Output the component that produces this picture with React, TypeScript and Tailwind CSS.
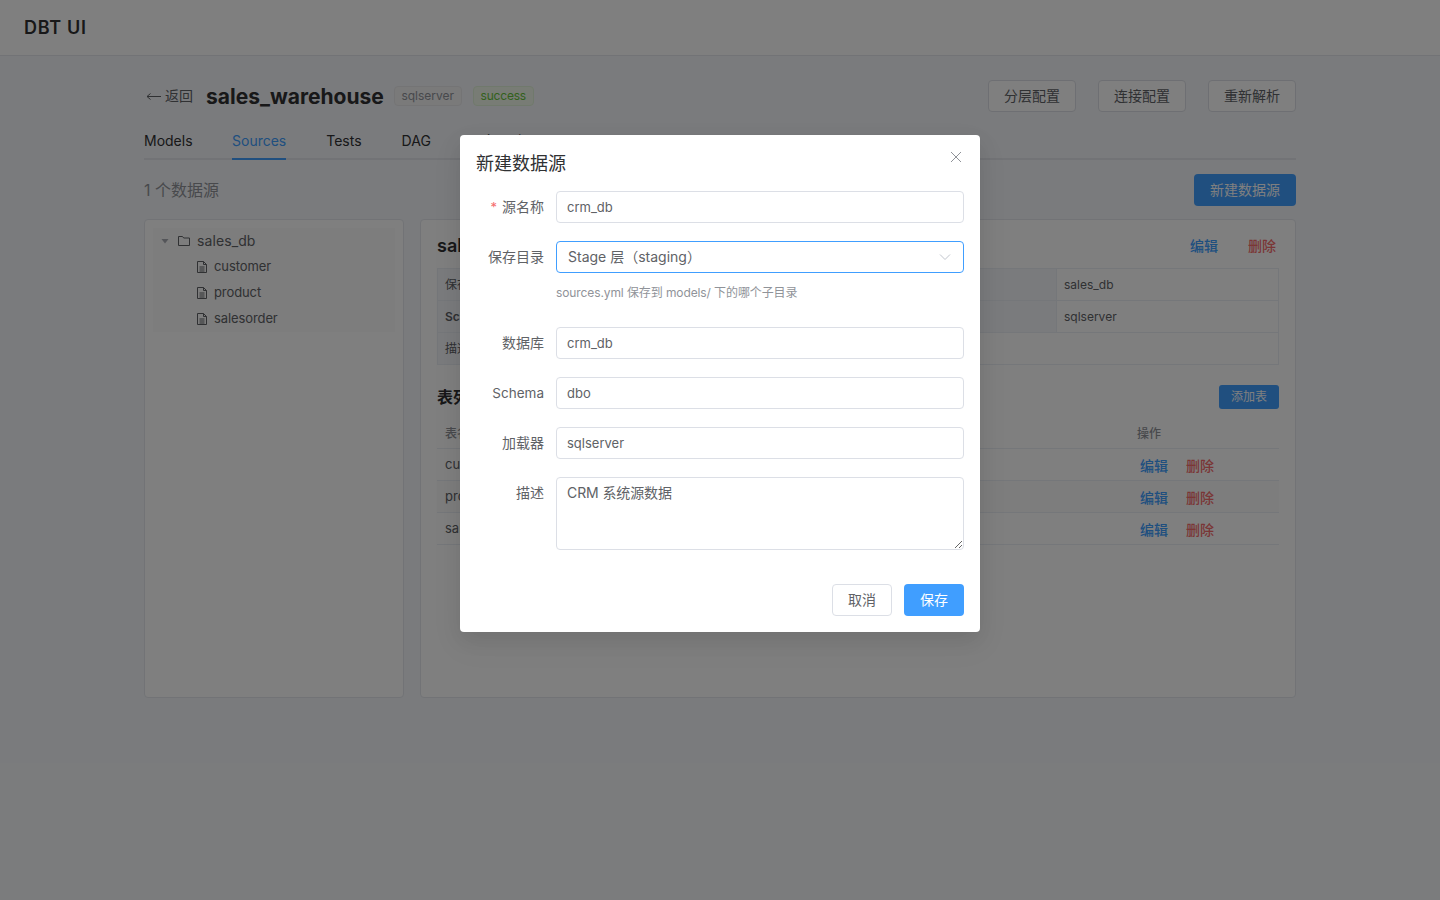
import React from "react";

const FONT = "font-['Inter','Noto_Sans_CJK_SC',sans-serif]";

function FolderIcon() {
  return (
    <svg width="14" height="14" viewBox="0 0 14 14" fill="none" stroke="#606266" strokeWidth="1">
      <path d="M1.5 2.5h4l1.2 1.5h5.8v7.5h-11z" />
    </svg>
  );
}

function DocIcon() {
  return (
    <svg width="12" height="14" viewBox="0 0 12 14" fill="none" stroke="#606266" strokeWidth="1">
      <path d="M1.5 1.5h6l3 3v8h-9z" />
      <path d="M7.5 1.5v3h3M3.5 7h5M3.5 9h5M3.5 11h5" />
    </svg>
  );
}

function TreeChild({ name }: { name: string }) {
  return (
    <div className="flex h-[26px] items-center pl-[43px] text-[13px] text-[#606266]">
      <DocIcon />
      <span className="ml-[6px] tracking-[-0.1px]">{name}</span>
    </div>
  );
}

function PlainInput({ value }: { value: string }) {
  return (
    <input
      readOnly
      value={value}
      className="h-8 w-full rounded border border-[#dcdfe6] bg-white px-[10px] text-[13px] text-[#606266] outline-none"
    />
  );
}

function Field({ label, required, children, latin }: { label: string; required?: boolean; children: React.ReactNode; latin?: boolean }) {
  return (
    <div className="flex">
      <label className={`flex h-8 w-[80px] shrink-0 items-center justify-end pr-3 text-[#606266] ${latin ? "text-[13.5px]" : "text-sm"}`}>
        {required && <span className="mr-[5px] text-[13px] leading-none text-[#f56c6c]">*</span>}
        {label}
      </label>
      <div className="flex-1">{children}</div>
    </div>
  );
}

function TableRow({ name, striped }: { name: string; striped?: boolean }) {
  return (
    <div className={`flex h-8 items-center border-b border-[#ebeef5] text-[13px] text-[#606266] ${striped ? "bg-[#fafafa]" : ""}`}>
      <span className="flex-1 pl-2">{name}</span>
      <span className="flex w-[142px] gap-[18px] pl-[3px] pt-[2px] text-sm font-medium">
        <span className="text-[#409eff]">编辑</span>
        <span className="text-[#f56c6c]">删除</span>
      </span>
    </div>
  );
}

export default function App() {
  return (
    <div className={`relative h-[900px] w-[1440px] overflow-hidden bg-[#f5f7fa] ${FONT}`}>
      <header className="flex h-14 items-center border-b border-[#e4e7ed] bg-white px-6">
        <span className="text-lg font-semibold tracking-[0.7px] text-[#303133]">DBT UI</span>
      </header>

      <main className="mx-auto w-[1152px] pt-6">
        <div className="flex h-8 items-center">
          <span className="flex items-center text-sm text-[#606266]">
            <svg width="16" height="16" viewBox="0 0 16 16" fill="none" stroke="#606266" strokeWidth="1" className="ml-[2px] mr-[3px]">
              <path d="M1 8.5h14M1 8.5l3.5-3M1 8.5l3.5 3" />
            </svg>
            返回
          </span>
          <h1 className="ml-[13px] pt-[2px] text-[21px] font-bold text-[#303133]">sales_warehouse</h1>
          <span className="ml-[10px] flex h-5 w-[68px] items-center justify-center rounded border border-[#e9e9eb] bg-[#f4f4f5] text-xs text-[#909399]">sqlserver</span>
          <span className="ml-[11px] flex h-5 w-[61px] items-center justify-center rounded border border-[#e1f3d8] bg-[#f0f9eb] text-xs tracking-[-0.2px] text-[#67c23a]">success</span>
          <div className="ml-auto flex gap-[22px]">
            {["分层配置", "连接配置", "重新解析"].map((t) => (
              <button key={t} className="h-8 w-[88px] rounded border border-[#dcdfe6] bg-white text-sm text-[#606266]">{t}</button>
            ))}
          </div>
        </div>

        <nav className="mt-[13px] flex h-[35px] gap-10 border-b-2 border-[#e4e7ed] text-sm text-[#303133]">
          <span className="flex h-[35px] w-[48px] items-center pb-[3px]">Models</span>
          <span className="flex h-[35px] items-center border-b-2 border-[#409eff] pb-[1px] text-[#409eff]">Sources</span>
          <span className="flex h-[35px] items-center pb-[3px]">Tests</span>
          <span className="flex h-[35px] items-center pb-[3px]">DAG</span>
          <span className="flex h-[35px] items-center pb-[3px]">运行历史</span>
        </nav>

        <div className="mt-[14px] flex h-8 items-center justify-between">
          <span className="text-base text-[#909399]">1 个数据源</span>
          <button className="h-8 w-[102px] rounded bg-[#409eff] text-sm text-white">新建数据源</button>
        </div>

        <div className="mt-[13px] flex gap-4">
          <aside className="h-[479px] w-[260px] rounded border border-[#e4e7ed] bg-white p-2">
            <div className="bg-[#fafafa]">
              <div className="flex h-[26px] items-center text-sm text-[#606266]">
                <svg width="8" height="8" viewBox="0 0 8 8" className="ml-2" fill="#a8abb2"><path d="M0.5 2h7L4 6.5z" /></svg>
                <span className="ml-[8px]"><FolderIcon /></span>
                <span className="ml-[6px] tracking-[0.1px]">sales_db</span>
              </div>
              <TreeChild name="customer" />
              <TreeChild name="product" />
              <TreeChild name="salesorder" />
            </div>
          </aside>

          <section className="h-[479px] flex-1 rounded border border-[#e4e7ed] bg-white px-4 pt-[10px]">
            <div className="flex h-[32px] items-center justify-between">
              <span className="text-lg font-semibold text-[#303133]">sales_db</span>
              <span className="mr-[3px] flex gap-[30px] text-sm font-medium">
                <span className="text-[#409eff]">编辑</span>
                <span className="text-[#f56c6c]">删除</span>
              </span>
            </div>
            <div className="mt-[6px] border border-b-0 border-[#ebeef5] text-xs text-[#606266]">
              <div className="flex h-8 border-b border-[#ebeef5]">
                <span className="flex w-[619px] items-center border-r border-[#ebeef5] bg-[#f5f7fa] pl-[7px]">保存目录</span>
                <span className="flex flex-1 items-center pl-[7px]">sales_db</span>
              </div>
              <div className="flex h-8 border-b border-[#ebeef5]">
                <span className="flex w-[619px] items-center border-r border-[#ebeef5] bg-[#f5f7fa] pl-[7px] font-semibold">Schema</span>
                <span className="flex flex-1 items-center pl-[7px]">sqlserver</span>
              </div>
              <div className="flex h-8 border-b border-[#ebeef5]">
                <span className="flex w-[100px] items-center bg-[#f5f7fa] pl-[7px]">描述</span>
              </div>
            </div>
            <div className="mt-[20px] flex h-6 items-center justify-between">
              <span className="text-base font-semibold text-[#303133]">表列表</span>
              <button className="h-6 w-[60px] rounded-[3px] bg-[#409eff] text-xs text-white">添加表</button>
            </div>
            <div className="mt-3 flex h-7 items-center border-b border-[#ebeef5] pb-[2px] text-xs font-medium text-[#909399]">
              <span className="flex-1 pl-2">表名</span>
              <span className="w-[142px]">操作</span>
            </div>
            <TableRow name="customer" />
            <TableRow name="product" striped />
            <TableRow name="salesorder" />
          </section>
        </div>
      </main>

      <div className="absolute inset-0 bg-black/50" />

      <div className="absolute left-[460px] top-[135px] h-[497px] w-[520px] rounded bg-white p-4 shadow-[0_12px_32px_4px_rgba(0,0,0,0.04),0_8px_20px_rgba(0,0,0,0.08)]">
        <div className="flex h-6 items-center pt-[1px] text-lg leading-6 text-[#303133]">新建数据源</div>
        <svg width="12" height="12" viewBox="0 0 12 12" stroke="#909399" strokeWidth="1" className="absolute right-[18px] top-4" fill="none">
          <path d="M1 1l10 10M11 1L1 11" />
        </svg>

        <div className="mt-4 flex flex-col">
          <Field label="源名称" required><PlainInput value="crm_db" /></Field>
          <div className="mt-[18px]">
            <Field label="保存目录">
              <div className="flex h-8 items-center justify-between rounded border border-[#409eff] pl-[11px] pr-3 text-sm text-[#606266]">
                <span>Stage 层（staging）</span>
                <svg width="12" height="12" viewBox="0 0 12 12" fill="none" stroke="#c0c4cc" strokeWidth="1"><path d="M1 3.5l5 5 5-5" /></svg>
              </div>
              <p className="mt-[11px] text-xs leading-[18px] tracking-[-0.1px] text-[#909399]">sources.yml 保存到 models/ 下的哪个子目录</p>
            </Field>
          </div>
          <div className="mt-[25px]"><Field label="数据库"><PlainInput value="crm_db" /></Field></div>
          <div className="mt-[18px]"><Field label="Schema" latin><PlainInput value="dbo" /></Field></div>
          <div className="mt-[18px]"><Field label="加载器"><PlainInput value="sqlserver" /></Field></div>
          <div className="mt-[18px]">
            <Field label="描述">
              <textarea
                readOnly
                value="CRM 系统源数据"
                className="block h-[73px] w-full rounded border border-[#dcdfe6] px-[10px] py-[4px] text-sm leading-[22px] tracking-[-0.1px] text-[#606266] outline-none"
              />
            </Field>
          </div>
        </div>

        <div className="mt-[34px] flex justify-end gap-3">
          <button className="h-8 w-[60px] rounded border border-[#dcdfe6] bg-white text-sm text-[#606266]">取消</button>
          <button className="h-8 w-[60px] rounded bg-[#409eff] text-sm text-white">保存</button>
        </div>
      </div>
    </div>
  );
}
